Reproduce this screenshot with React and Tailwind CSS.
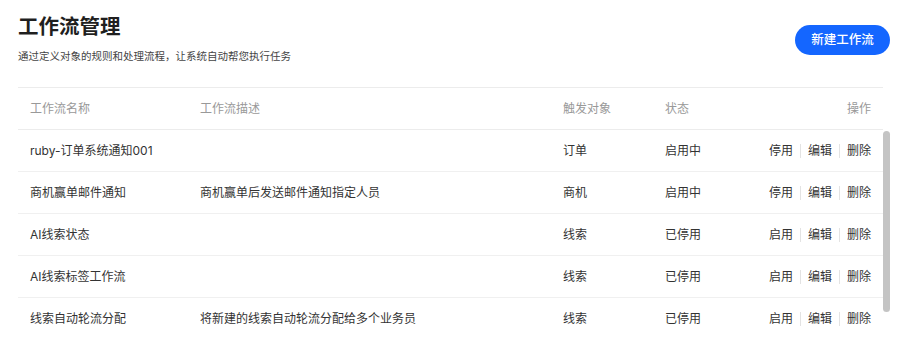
const rows = [
  { name: "ruby-订单系统通知001", desc: "", target: "订单", status: "启用中", toggle: "停用" },
  { name: "商机赢单邮件通知", desc: "商机赢单后发送邮件通知指定人员", target: "商机", status: "启用中", toggle: "停用" },
  { name: "AI线索状态", desc: "", target: "线索", status: "已停用", toggle: "启用" },
  { name: "AI线索标签工作流", desc: "", target: "线索", status: "已停用", toggle: "启用" },
  { name: "线索自动轮流分配", desc: "将新建的线索自动轮流分配给多个业务员", target: "线索", status: "已停用", toggle: "启用" },
];

const cols = "grid grid-cols-[170px_363px_102px_1fr_auto] items-center";

export default function App() {
  return (
    <div className="h-[338px] overflow-hidden bg-white flex flex-col font-['Inter','Noto_Sans_CJK_SC',sans-serif] text-[#333]">
      {/* Header */}
      <div className="flex justify-between items-center pl-[18px] pr-[10px] pt-[13px]">
        <div>
          <h1 className="text-[20.5px] leading-[28px] font-bold text-[#1f1f1f]">工作流管理</h1>
          <p className="mt-[8px] text-[10.5px] leading-[16px] text-[#444]">
            通过定义对象的规则和处理流程，让系统自动帮您执行任务
          </p>
        </div>
        <button className="h-[30px] w-[95px] rounded-full bg-[#1466ff] text-white text-[12.5px] font-medium mt-[2px]">
          新建工作流
        </button>
      </div>

      {/* Table */}
      <div className="mt-[22px] ml-[18px] mr-[9px] flex-1 min-h-0 flex flex-col text-[12px]">
        <div className={`${cols} mr-[8px] h-[43px] border-y border-[#ececec] text-[#999]`}>
          <div className="px-3">工作流名称</div>
          <div className="px-3">工作流描述</div>
          <div className="px-3">触发对象</div>
          <div className="px-3">状态</div>
          <div className="px-3 text-right">操作</div>
        </div>
        <div className="flex-1 min-h-0 flex overflow-hidden">
          <div className="flex-1">
            {rows.map((r, i) => (
              <div key={i} className={`${cols} h-[42px] border-b border-[#f0f0f0]`}>
                <div className="px-3 whitespace-nowrap">{r.name}</div>
                <div className="px-3 whitespace-nowrap">{r.desc}</div>
                <div className="px-3">{r.target}</div>
                <div className="px-3">{r.status}</div>
                <div className="px-3 flex items-center">
                  <span>{r.toggle}</span>
                  <span className="mx-[7px] w-px h-[14px] bg-[#e3e3e3]" />
                  <span>编辑</span>
                  <span className="mx-[7px] w-px h-[14px] bg-[#e3e3e3]" />
                  <span>删除</span>
                </div>
              </div>
            ))}
          </div>
          {/* scrollbar */}
          <div className="w-[8px] pt-[1px]">
            <div className="w-[7px] h-[181px] rounded-full bg-[#c4c4c4]" />
          </div>
        </div>
      </div>
    </div>
  );
}
